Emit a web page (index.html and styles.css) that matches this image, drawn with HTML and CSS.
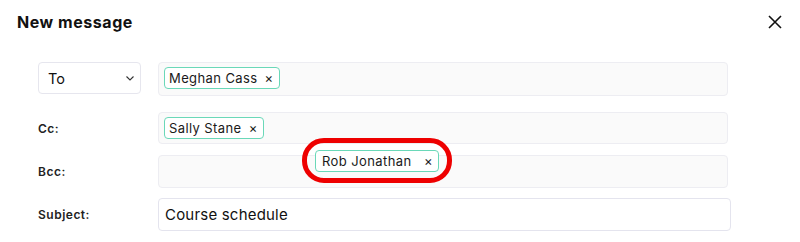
FILE: index.html
```html
<!DOCTYPE html>
<html>
<head>
    <link rel="stylesheet" href="styles.css">
</head>
<body>
    <div class="modal">
        <div class="header">
            <h1 class="title">New message</h1>
            <button class="close" aria-label="Close">
                <svg width="14" height="14" viewBox="0 0 14 14"><path d="M1 1L13 13M13 1L1 13" stroke="#111" stroke-width="1.6" fill="none"/></svg>
            </button>
        </div>
        <div class="form">
            <div class="row row-to">
                <div class="label-cell">
                    <div class="select">
                        <span>To</span>
                        <svg width="8" height="5" viewBox="0 0 8 5"><path d="M0.5 0.5L4 4L7.5 0.5" stroke="#333" stroke-width="1.1" fill="none"/></svg>
                    </div>
                </div>
                <div class="field">
                    <span class="chip">Meghan Cass <span class="x">×</span></span>
                </div>
            </div>

            <div class="row row-cc">
                <div class="label">Cc:</div>
                <div class="field">
                    <span class="chip">Sally Stane <span class="x">×</span></span>
                </div>
            </div>

            <div class="row row-bcc">
                <div class="label">Bcc:</div>
                <div class="field"></div>
            </div>

            <div class="row row-subject">
                <div class="label">Subject:</div>
                <div class="input">Course schedule</div>
            </div>
        </div>

        <div class="drag">
            <span class="chip">Rob Jonathan <span class="x">×</span></span>
        </div>
    </div>
</body>
</html>
```

FILE: styles.css
```css
html, body {
    margin: 0;
    background: #ffffff;
}

body {
    font-family: "Inter", "Liberation Sans", sans-serif;
    color: #1a1a1a;
}

.modal {
    width: 800px;
    height: 242px;
    position: relative;
}

.header {
    display: flex;
    justify-content: space-between;
    align-items: center;
    padding: 11px 18px 0 17px;
    height: 22px;
}

.title {
    margin: 0;
    font-size: 16px;
    font-weight: 700;
    letter-spacing: 0.55px;
    color: #111;
}

.close {
    border: none;
    background: none;
    padding: 0;
    width: 14px;
    height: 14px;
    display: flex;
}

.form {
    display: flex;
    flex-direction: column;
    padding: 29px 0 0 38px;
}

.row {
    display: grid;
    grid-template-columns: 120px 570px;
}

.row-to {
    height: 34px;
}

.row-cc {
    height: 32px;
    margin-top: 16px;
}

.row-bcc {
    height: 33px;
    margin-top: 11px;
}

.row-subject {
    height: 33px;
    margin-top: 10px;
}

.label-cell {
    display: flex;
    align-items: flex-start;
}

.select {
    width: 103px;
    height: 32px;
    border: 1px solid #e6e6ee;
    border-radius: 4px;
    display: flex;
    align-items: center;
    justify-content: space-between;
    padding: 0 6px 0 9px;
    box-sizing: border-box;
    font-size: 14.5px;
    color: #111;
}

.label {
    display: flex;
    align-items: center;
    font-size: 12px;
    font-weight: 600;
    letter-spacing: 0.5px;
    color: #222;
}

.field {
    background: #fafafa;
    border: 1px solid #ededf2;
    border-radius: 4px;
    box-sizing: border-box;
    padding: 4px 5px;
    display: flex;
    align-items: flex-start;
}

.input {
    border: 1px solid #e4e4ee;
    border-radius: 4px;
    box-sizing: border-box;
    width: 573px;
    display: flex;
    align-items: center;
    padding: 0 6px;
    font-size: 15px;
    letter-spacing: 0.2px;
    color: #111;
}

.chip {
    display: inline-flex;
    align-items: center;
    height: 22px;
    box-sizing: border-box;
    border: 1.5px solid #6ad8b8;
    border-radius: 4px;
    padding: 0 5px 0 4px;
    font-size: 13px;
    letter-spacing: 0.4px;
    color: #1a1a1a;
    background: #fff;
    white-space: pre;
}

.x {
    font-size: 13px;
    margin-left: 3px;
}

.drag {
    position: absolute;
    left: 302px;
    top: 138px;
    width: 150px;
    height: 45px;
    box-sizing: border-box;
    border: 5px solid #ee0000;
    border-radius: 22px;
    display: flex;
    align-items: center;
    justify-content: center;
}

.drag .chip {
    width: 124px;
    padding-left: 6px;
}

.drag .x {
    margin-left: auto;
}
```
